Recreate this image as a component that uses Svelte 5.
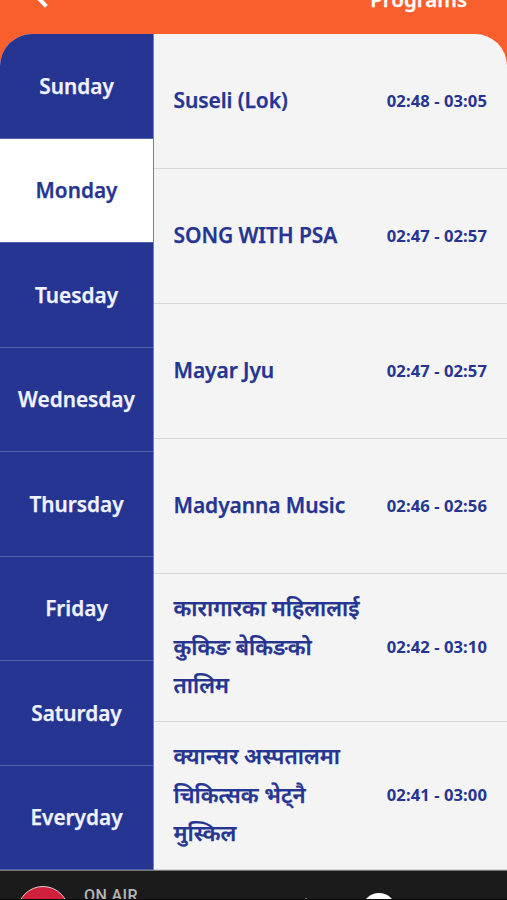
<script lang="ts">
  type Program = {
    lines: string[];
    time: string;
    nepali?: boolean;
  };

  const days = [
    'Sunday',
    'Monday',
    'Tuesday',
    'Wednesday',
    'Thursday',
    'Friday',
    'Saturday',
    'Everyday',
  ];

  const programs: Program[] = [
    { lines: ['Suseli (Lok)'], time: '02:48 - 03:05' },
    { lines: ['SONG WITH PSA'], time: '02:47 - 02:57' },
    { lines: ['Mayar Jyu'], time: '02:47 - 02:57' },
    { lines: ['Madyanna Music'], time: '02:46 - 02:56' },
    {
      lines: ['कारागारका महिलालाई', 'कुकिङ बेकिङको', 'तालिम'],
      time: '02:42 - 03:10',
      nepali: true,
    },
    {
      lines: ['क्यान्सर अस्पतालमा', 'चिकित्सक भेट्नै', 'मुस्किल'],
      time: '02:41 - 03:00',
      nepali: true,
    },
  ];

  let selected = $state('Monday');
</script>

<div class="screen">
  <header>
    <button class="back" aria-label="Back">
      <svg width="14" height="22" viewBox="0 0 14 22">
        <path d="M11 2 L2.5 11 L11 20" />
      </svg>
    </button>
    <h1>Programs</h1>
  </header>

  <main>
    <nav>
      {#each days as day (day)}
        <button
          class="day"
          class:active={day === selected}
          onclick={() => (selected = day)}
        >
          {day}
        </button>
      {/each}
    </nav>

    <ul>
      {#each programs as program}
        <li class:nepali={program.nepali}>
          <div class="title">
            {#each program.lines as line}
              <span>{line}</span>
            {/each}
          </div>
          <time>{program.time}</time>
        </li>
      {/each}
    </ul>
  </main>

  <footer>
    <span class="station"></span>
    <span class="on-air">ON AIR</span>
    <span class="volume"></span>
    <span class="play"></span>
  </footer>
</div>

<style>
  :global(body) {
    overflow: hidden;
    background: #f95f2c;
  }

  .screen {
    display: flex;
    flex-direction: column;
    width: 507px;
    height: 900px;
    overflow: hidden;
    background: #f95f2c;
    font-family: 'Noto Sans', 'Open Sans', sans-serif;
    font-weight: 600;
    -webkit-text-stroke: 0.25px;
  }

  /* The bar is mostly scrolled past the top edge. */
  header {
    display: flex;
    align-items: center;
    justify-content: space-between;
    flex: none;
    box-sizing: border-box;
    height: 70px;
    margin-top: -36px;
    padding: 0 40px 0 33.5px;
  }

  button {
    margin: 0;
    padding: 0;
    border: 0;
    background: none;
    font: inherit;
  }

  .back {
    height: 22px;
    margin-bottom: 7px;
  }
  .back svg {
    display: block;
    overflow: visible;
    fill: none;
    stroke: #fff;
    stroke-width: 4;
    stroke-linecap: square;
  }

  h1 {
    margin: 0;
    color: #fff;
    font-size: 20.5px;
    font-weight: 600;
    line-height: 30px;
  }

  main {
    display: flex;
    flex: none;
    height: 836px;
    overflow: hidden;
    border-radius: 32px 32px 0 0;
    background: #f4f4f4;
  }

  nav {
    display: flex;
    flex-direction: column;
    flex: none;
    box-sizing: border-box;
    width: 154px;
    border-right: 1px solid #7381b9;
  }

  .day {
    flex: 1;
    box-sizing: border-box;
    border-bottom: 1px solid #5361a8;
    background: #263592;
    color: #f0f2ff;
    font-size: 20.8px;
    line-height: 30px;
    text-align: center;
  }
  .day.active {
    background: #fff;
    color: #263592;
  }

  ul {
    flex: 1;
    margin: 0;
    padding: 0;
    list-style: none;
  }

  li {
    display: flex;
    align-items: center;
    justify-content: space-between;
    box-sizing: border-box;
    height: 135px;
    padding: 0 20px 1px 19.5px;
    border-bottom: 1px solid #d5d5d5;
    color: #263592;
  }
  li.nepali {
    height: 148px;
    padding-bottom: 3px;
  }

  .title {
    font-size: 21px;
    line-height: 38.5px;
    letter-spacing: -0.1px;
    white-space: nowrap;
  }
  .nepali .title {
    font-size: 22.1px;
    letter-spacing: 0;
  }
  .title span {
    display: block;
  }

  time {
    font-size: 16.6px;
    font-weight: 700;
    letter-spacing: 0.08px;
    white-space: nowrap;
    -webkit-text-stroke: 0;
  }

  footer {
    display: flex;
    align-items: flex-start;
    flex: none;
    box-sizing: border-box;
    height: 30px;
    overflow: hidden;
    padding-left: 17px;
    border-top: 1px solid #777;
    border-bottom: 1px solid #080808;
    background: #1b1b1b;
  }

  .station {
    box-sizing: border-box;
    width: 52px;
    height: 52px;
    margin-top: 15px;
    border: 1px solid #e8c8cc;
    border-radius: 50%;
    background: #d11f3e;
  }

  .on-air {
    width: 221px;
    margin: 14px 0 0 15px;
    color: #b5b5b5;
    font-family: Roboto, sans-serif;
    font-size: 16px;
    font-weight: 500;
    letter-spacing: 0.4px;
    line-height: 22px;
    -webkit-text-stroke: 0;
  }

  /* Only the tip of the icon clears the bottom edge. */
  .volume {
    width: 2px;
    height: 2px;
    margin: 27px 55px 0 0;
    background: #666;
  }

  .play {
    width: 34px;
    height: 34px;
    margin-top: 22px;
    border-radius: 50%;
    background: #fff;
  }
</style>
